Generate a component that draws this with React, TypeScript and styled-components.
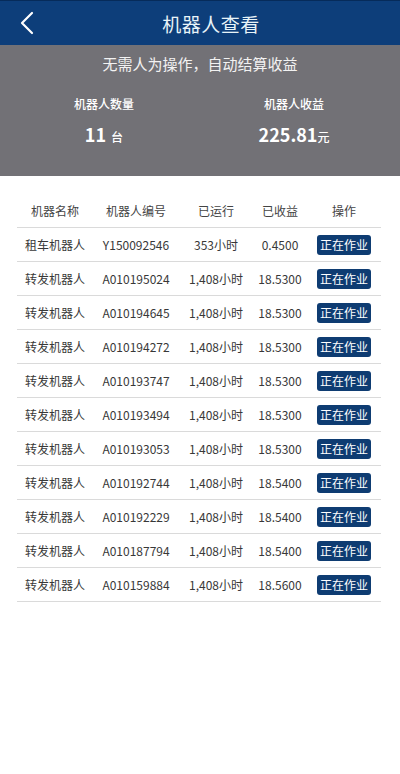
import React from 'react';
import styled, { createGlobalStyle } from 'styled-components';

const GlobalStyle = createGlobalStyle`
  html, body {
    margin: 0;
    padding: 0;
    background: #ffffff;
  }
  * {
    box-sizing: border-box;
  }
  body {
    font-family: "Noto Sans CJK SC", "Noto Sans", sans-serif;
  }
`;

const Page = styled.div`
  width: 400px;
  min-height: 774px;
  background: #ffffff;
`;

const TopBar = styled.header`
  position: relative;
  display: flex;
  align-items: center;
  justify-content: center;
  height: 45px;
  padding-left: 22px;
  background: #0d3e7a;
  border-top: 1px solid #062b5a;
`;

const BackButton = styled.button`
  position: absolute;
  left: 14px;
  top: 9px;
  display: flex;
  width: 26px;
  height: 26px;
  padding: 0;
  border: none;
  background: transparent;
  align-items: center;
  justify-content: center;
`;

const Title = styled.h1`
  margin: 0;
  font-size: 19px;
  font-weight: 400;
  color: #e8f4f8;
  letter-spacing: 0.5px;
`;

const Summary = styled.section`
  height: 131px;
  background: #727176;
  color: #ffffff;
  padding-top: 8px;
`;

const Slogan = styled.div`
  text-align: center;
  font-size: 15px;
  line-height: 22px;
  color: #f2f2f2;
`;

const Stats = styled.div`
  display: grid;
  grid-template-columns: 1fr 1fr;
  padding: 0 11px 0 9px;
  margin-top: 21px;
`;

const Stat = styled.div`
  display: flex;
  flex-direction: column;
  align-items: center;
`;

const StatLabel = styled.div`
  font-size: 12px;
  line-height: 16px;
  font-weight: 500;
`;

const StatValue = styled.div`
  margin-top: 10px;
  font-size: 18px;
  line-height: 24px;
  font-weight: 700;
`;

const Unit = styled.span<{ $gap?: boolean }>`
  font-size: 12px;
  font-weight: 500;
  margin-left: ${p => (p.$gap ? '5px' : '0')};
`;

const Table = styled.div`
  margin: 18px 19px 0 17px;
`;

const Row = styled.div`
  display: grid;
  grid-template-columns: 76px 86px 74px 54px 74px;
  height: 34px;
  align-items: center;
  border-bottom: 1px solid #dadada;
  font-size: 12px;
  color: #333333;
`;

const Cell = styled.div<{ $head?: boolean }>`
  text-align: center;
  white-space: nowrap;
  color: ${p => (p.$head ? '#444444' : '#383838')};
`;

const StatusTag = styled.span`
  display: inline-block;
  height: 20px;
  line-height: 20px;
  padding: 0 3px;
  border-radius: 3px;
  background: #0e3c72;
  color: #ffffff;
  font-size: 12px;
`;

const robots = [
  ['租车机器人', 'Y150092546', '353小时', '0.4500'],
  ['转发机器人', 'A010195024', '1,408小时', '18.5300'],
  ['转发机器人', 'A010194645', '1,408小时', '18.5300'],
  ['转发机器人', 'A010194272', '1,408小时', '18.5300'],
  ['转发机器人', 'A010193747', '1,408小时', '18.5300'],
  ['转发机器人', 'A010193494', '1,408小时', '18.5300'],
  ['转发机器人', 'A010193053', '1,408小时', '18.5300'],
  ['转发机器人', 'A010192744', '1,408小时', '18.5400'],
  ['转发机器人', 'A010192229', '1,408小时', '18.5400'],
  ['转发机器人', 'A010187794', '1,408小时', '18.5400'],
  ['转发机器人', 'A010159884', '1,408小时', '18.5600'],
];

export default function App() {
  return (
    <Page>
      <GlobalStyle />
      <TopBar>
        <BackButton aria-label="返回">
          <svg width="14" height="24" viewBox="0 0 14 24">
            <path d="M12 2 L2 12 L12 22" fill="none" stroke="#ffffff" strokeWidth="2.2" strokeLinecap="round" strokeLinejoin="round" />
          </svg>
        </BackButton>
        <Title>机器人查看</Title>
      </TopBar>

      <Summary>
        <Slogan>无需人为操作，自动结算收益</Slogan>
        <Stats>
          <Stat>
            <StatLabel>机器人数量</StatLabel>
            <StatValue>
              11<Unit $gap>台</Unit>
            </StatValue>
          </Stat>
          <Stat>
            <StatLabel>机器人收益</StatLabel>
            <StatValue>
              225.81<Unit>元</Unit>
            </StatValue>
          </Stat>
        </Stats>
      </Summary>

      <Table>
        <Row>
          <Cell $head>机器名称</Cell>
          <Cell $head>机器人编号</Cell>
          <Cell $head>已运行</Cell>
          <Cell $head>已收益</Cell>
          <Cell $head>操作</Cell>
        </Row>
        {robots.map(([name, id, run, income]) => (
          <Row key={id}>
            <Cell>{name}</Cell>
            <Cell>{id}</Cell>
            <Cell>{run}</Cell>
            <Cell>{income}</Cell>
            <Cell>
              <StatusTag>正在作业</StatusTag>
            </Cell>
          </Row>
        ))}
      </Table>
    </Page>
  );
}
